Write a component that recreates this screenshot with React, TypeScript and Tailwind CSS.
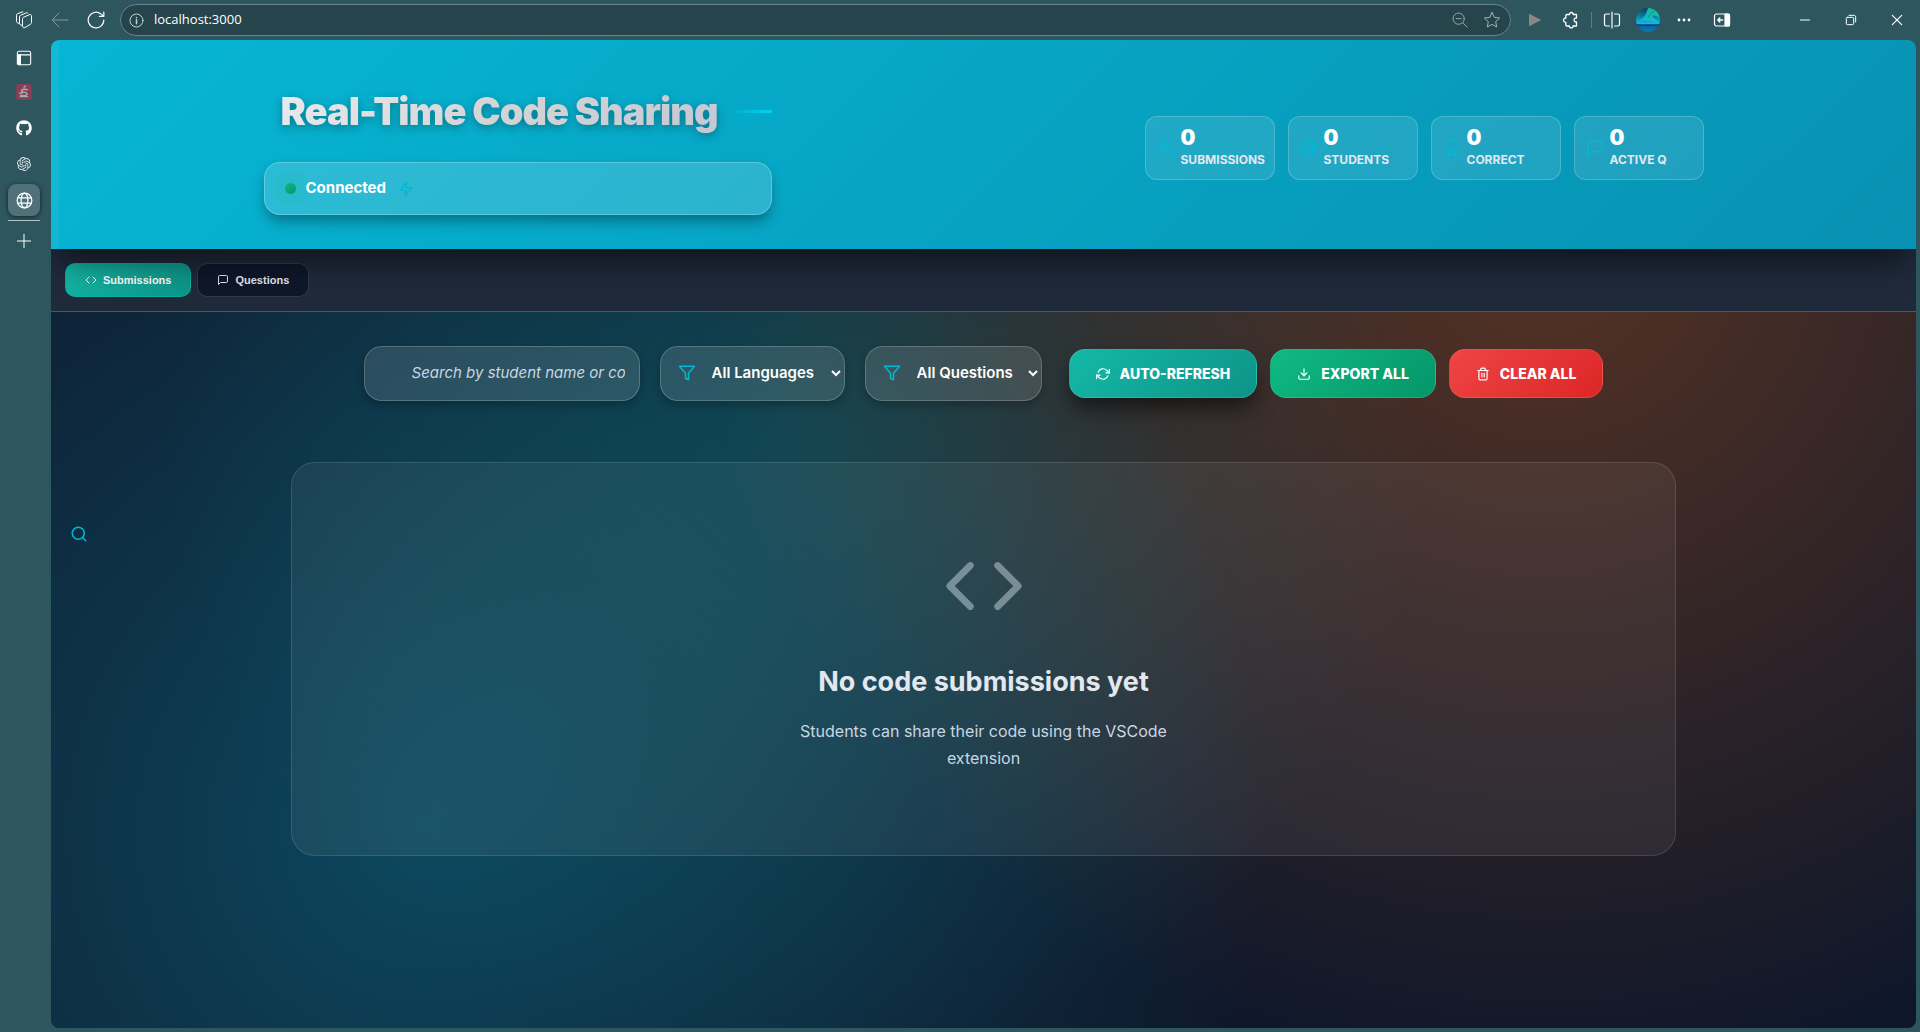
import React from "react";
import {
  FiAward,
  FiCode,
  FiDownload,
  FiFilter,
  FiMessageSquare,
  FiRefreshCw,
  FiSearch,
  FiTrash2,
  FiUsers,
  FiZap,
} from "react-icons/fi";
import { SiOpenai } from "react-icons/si";
import { FaGithub } from "react-icons/fa";

type IconProps = { className?: string };

const Stroke = ({
  className,
  size = 18,
  width = 1,
  children,
}: IconProps & { size?: number; width?: number; children: React.ReactNode }) => (
  <svg
    className={className}
    width={size}
    height={size}
    viewBox="0 0 18 18"
    fill="none"
    stroke="currentColor"
    strokeWidth={width}
    strokeLinecap="round"
    strokeLinejoin="round"
    aria-hidden="true"
  >
    {children}
  </svg>
);

const GlobeIcon = ({ className, size = 18 }: IconProps & { size?: number }) => (
  <Stroke className={className} size={size} width={1.3}>
    <circle cx="9" cy="9" r="7.8" />
    <ellipse cx="9" cy="9" rx="3.6" ry="7.8" />
    <path d="M1.8 6.2h14.4M1.8 11.8h14.4" />
  </Stroke>
);

const ToolButton = ({
  label,
  className = "",
  children,
}: {
  label: string;
  className?: string;
  children: React.ReactNode;
}) => (
  <button aria-label={label} className={`flex h-8 items-center justify-center ${className}`}>
    {children}
  </button>
);

function BrowserBar() {
  return (
    <div className="flex h-10 items-center text-white">
      <ToolButton label="Workspaces" className="ml-2 w-8">
        <Stroke>
          <path d="M7.5 7.8c0-.8.3-1.200.9-1.500l6-2.600c1.200-.5 2.100.1 2.100 1.200v6.600c0 .8-.3 1.300-1 1.700l-5.400 3.300c-1.300.7-2.600 0-2.600-1.300z" />
          <path d="M7 14.500l-1.800-.9c-.5-.3-.7-.7-.7-1.300V5.800c0-.7.3-1.200.9-1.400l5.600-2.500c.8-.3 1.500-.1 2 .5" />
          <path d="M4 12.500l-1.800-.9c-.5-.3-.7-.7-.7-1.300V4.200c0-.7.3-1.200.9-1.400L7.800.8" />
        </Stroke>
      </ToolButton>
      <ToolButton label="Back" className="ml-1 w-8 text-[#83999e]">
        <Stroke>
          <path d="M17 9H1.500M8 2 1.200 9 8 16" />
        </Stroke>
      </ToolButton>
      <ToolButton label="Reload" className="ml-1 w-8">
        <Stroke width={1.2}>
          <path d="M16.800 9A7.800 7.800 0 1 1 13.800 2.900L16.600 5.200M16.800 1v4.400h-4.400" />
        </Stroke>
      </ToolButton>
      <div className="ml-2 flex h-8 flex-1 items-center rounded-full border border-[#68838a] bg-[#26444c] pr-0.5 pl-2">
        <Stroke size={15} className="text-[#c7d1d3]" width={1.2}>
          <circle cx="9" cy="9" r="7.800" />
          <path d="M9 8.200V13M9 5.400v.4" strokeWidth="1.800" />
        </Stroke>
        <input
          aria-label="Address"
          defaultValue="localhost:3000"
          className="ml-[10px] min-w-0 flex-1 bg-transparent font-['Open_Sans',sans-serif] text-[13px] text-white outline-none"
        />
        <ToolButton label="Zoom out" className="w-8 text-[#a3b3b7]">
          <Stroke size={16}>
            <circle cx="7.500" cy="7.500" r="6.300" />
            <path d="M4.800 7.500h5.400M12 12l5 5" />
          </Stroke>
        </ToolButton>
        <ToolButton label="Add to favorites" className="w-8 text-[#a3b3b7]">
          <Stroke>
            <path d="m9 1.400 2.300 4.900 5.300.7-3.900 3.700 1 5.300L9 13.400 4.300 16l1-5.300L1.400 7l5.300-.7z" />
          </Stroke>
        </ToolButton>
      </div>
      <ToolButton label="Run" className="ml-2 w-8">
        <svg width="14" height="14" viewBox="0 0 14 14" aria-hidden="true">
          <path d="M1 .8 13.400 7 1 13.200z" fill="#8a8785" />
        </svg>
      </ToolButton>
      <ToolButton label="Extensions" className="ml-1 w-8">
        <Stroke width={1.3}>
          <path d="M5 3.500h2.500c0-2.700 3.700-2.700 3.700 0H14.500V7c-.2 0-2.400-.3-2.400 2s2.200 2 2.400 2v4H11c0 2.600-3.600 2.600-3.600 0H5c-.8 0-1.200-.4-1.200-1.200v-2.500c-3 0-3-4.300 0-4.300V4.800c0-.8.4-1.300 1.200-1.300z" />
        </Stroke>
      </ToolButton>
      <div className="ml-1 h-4 w-px bg-[#5f7d83]" />
      <ToolButton label="Split screen" className="ml-1 w-8">
        <Stroke width={1.2}>
          <path d="M6.500 3H3.200C2 3 1.500 3.600 1.500 4.700v8.600c0 1.100.5 1.700 1.700 1.700h3.300M11.500 3h3.300c1.200 0 1.700.6 1.700 1.700v8.600c0 1.100-.5 1.700-1.700 1.700h-3.300M9 1v16" />
        </Stroke>
      </ToolButton>
      <ToolButton label="Profile" className="ml-1 w-8">
        <svg width="24" height="24" viewBox="0 0 24 24" aria-hidden="true">
          <defs>
            <clipPath id="avatar">
              <circle cx="12" cy="12" r="12" />
            </clipPath>
            <linearGradient id="sky" x1="0" y1="0" x2="0" y2="1">
              <stop offset="0" stopColor="#063f5e" />
              <stop offset=".45" stopColor="#0897bb" />
              <stop offset=".66" stopColor="#14b9dc" />
              <stop offset=".7" stopColor="#08307d" />
              <stop offset=".78" stopColor="#0869a6" />
              <stop offset="1" stopColor="#087fa6" />
            </linearGradient>
            <linearGradient id="aurora" x1="0" y1="1" x2="1" y2="0">
              <stop offset="0" stopColor="#12b6dc" />
              <stop offset="1" stopColor="#18d69a" />
            </linearGradient>
          </defs>
          <g clipPath="url(#avatar)">
            <rect width="24" height="24" fill="url(#sky)" />
            <path d="M2 13C9 11 10 6 12 0h7c2 3 4 6 5 10-3-2-5-3-8-2 2 2 4 4 7 7-7-2-14-3-21-2z" fill="url(#aurora)" opacity=".85" />
            <path d="M10 1c-1 4-3 6-6 8M19 3c-3 1-5 3-7 7" stroke="#064a67" strokeWidth="1" fill="none" opacity=".4" />
          </g>
        </svg>
      </ToolButton>
      <ToolButton label="Settings and more" className="ml-1 w-8">
        <svg width="14" height="4" viewBox="0 0 14 4" fill="currentColor" aria-hidden="true">
          <circle cx="2" cy="2" r="1.400" />
          <circle cx="7" cy="2" r="1.400" />
          <circle cx="12" cy="2" r="1.400" />
        </svg>
      </ToolButton>
      <ToolButton label="Sidebar" className="ml-1.5 w-8">
        <Stroke width={1.2}>
          <rect x="1.500" y="3" width="15" height="12" rx="2" />
          <path d="M12 3h3.500c.8 0 1 .5 1 1v10c0 .6-.2 1-1 1H12z" fill="currentColor" />
          <path d="M9.500 9H5M6.800 7 4.800 9l2 2" strokeWidth="1.500" />
        </Stroke>
      </ToolButton>
      <ToolButton label="Minimize" className="ml-11 w-[46px]">
        <Stroke size={12} width={1.5}>
          <path d="M2 9h14" />
        </Stroke>
      </ToolButton>
      <ToolButton label="Restore" className="w-[46px]">
        <Stroke size={12} width={1.5}>
          <rect x="2" y="5" width="11" height="11" rx="1.500" />
          <path d="M6 2h7.500C15 2 16 3 16 4.500V12" />
        </Stroke>
      </ToolButton>
      <ToolButton label="Close" className="w-[46px]">
        <Stroke size={12} width={1.8}>
          <path d="m2 2 14 14M16 2 2 16" />
        </Stroke>
      </ToolButton>
    </div>
  );
}

function TabStrip() {
  return (
    <nav
      aria-label="Vertical tabs"
      className="flex w-[51px] shrink-0 flex-col items-center gap-1 pr-[3px] text-white"
    >
      <button aria-label="Tab actions" className="flex h-8 w-8 items-center justify-center pt-1">
        <Stroke size={16} width={1.2}>
          <rect x="1.500" y="1.500" width="15" height="15" rx="2" />
          <path d="M2 5.500h14" />
          <path d="M2 5.500h3v11H3c-.7 0-1-.4-1-1z" fill="currentColor" />
        </Stroke>
      </button>
      <button aria-label="Saved page tab" className="flex h-8 w-8 items-center justify-center">
        <svg width="16" height="16" viewBox="0 0 16 16" aria-hidden="true">
          <path d="M3 0h10c2 0 3 1 3 3-.5 2-.5 3 0 5-.5 2-.5 3 0 5 0 2-1 3-3 3H3c-2 0-3-1-3-3 .5-2 .5-3 0-5 .5-2 .5-3 0-5 0-2 1-3 3-3z" fill="#8b3d56" />
          <path
            d="M11.500 5.800C10 4.900 5.500 4.900 5.500 6.700c0 1.700 5.500 1.200 5.500 3.300 0 2-4.500 2.200-6.500 1.200M3.500 9h3M4 12.600h7.500M8 3.200 9.500 2"
            stroke="#a3acb0"
            strokeWidth="1.400"
            fill="none"
            strokeLinecap="round"
          />
        </svg>
      </button>
      <button aria-label="GitHub tab" className="flex h-8 w-8 items-center justify-center">
        <FaGithub size={16} />
      </button>
      <button aria-label="ChatGPT tab" className="flex h-8 w-8 items-center justify-center text-[#dfe6e7]">
        <SiOpenai size={14} />
      </button>
      <button
        aria-label="localhost tab"
        className="flex h-8 w-8 items-center justify-center rounded-lg bg-[#50717a] shadow-[0_1px_4px_rgba(0,0,0,0.6)]"
      >
        <GlobeIcon size={17} />
      </button>
      <div className="h-px w-8 bg-[#b4c2c5]" />
      <button aria-label="New tab" className="flex h-8 w-8 items-center justify-center">
        <Stroke size={14} width={1.3}>
          <path d="M9 0v18M0 9h18" />
        </Stroke>
      </button>
    </nav>
  );
}

const stats = [
  { label: "Submissions", value: 0, Icon: FiUsers },
  { label: "Students", value: 0, Icon: GlobeIcon },
  { label: "Correct", value: 0, Icon: FiAward },
  { label: "Active Q", value: 0, Icon: FiMessageSquare },
];

function Hero() {
  return (
    <header className="relative z-10 border-l-8 border-white/5 bg-[linear-gradient(135deg,#06b6d4,#0891b2)] bg-origin-border shadow-[0_20px_32px_-8px_rgba(0,0,0,0.55)]">
      <div className="mx-auto flex max-w-[1448px] items-center justify-between pt-[41px] pr-2 pb-[34px]">
        <div className="flex flex-col gap-5">
          <div className="flex items-center gap-4 pl-[17px]">
            <h1 className="bg-[linear-gradient(135deg,#e9ebee,#d4d4d4_50%,#c4c8d4)] bg-clip-text text-[38px]/[61px] font-black tracking-tight text-transparent drop-shadow-[0_3px_5px_rgba(0,0,0,0.3)]">
              Real-Time Code Sharing
            </h1>
            <span className="h-[3px] w-[38px] rounded-full bg-linear-to-r from-[#00d4f5]/10 to-[#00d4f5] shadow-[0_2px_8px_rgba(0,212,245,0.3)]" />
          </div>
          <div className="flex h-[53px] items-center rounded-2xl border border-white/25 bg-white/15 px-5 shadow-[0_8px_14px_-2px_rgba(0,0,0,0.35)]">
            <span className="size-[11px] rounded-full bg-linear-to-br from-[#10b981] to-[#059669] ring-[11px] ring-[#10b981]/10" />
            <span className="ml-[10px] text-[15px] font-bold text-white">Connected</span>
            <FiZap size={16} className="ml-3 text-[#06b6d4]" />
          </div>
        </div>
        <dl className="flex gap-[13px]">
          {stats.map(({ label, value, Icon }) => (
            <div
              key={label}
              className="flex h-16 w-[130px] items-center gap-[6px] rounded-xl border border-white/20 bg-white/10 pl-[11px]"
            >
              <Icon size={18} className="shrink-0 text-[#06b6d4]" />
              <div className="flex flex-col-reverse pb-[3px]">
                <dt className="text-[12px]/[18px] font-bold text-slate-200 uppercase">{label}</dt>
                <dd className="text-[21px]/[26px] font-black text-white">{value}</dd>
              </div>
            </div>
          ))}
        </dl>
      </div>
    </header>
  );
}

function ViewTabs() {
  return (
    <nav
      aria-label="Views"
      className="flex gap-[6px] border-b border-[#4b5565] bg-[#1f2a3b] px-[14px] py-[14px] font-['Liberation_Sans',Arial,sans-serif] text-[11px] font-bold"
    >
      <button className="flex h-[34px] items-center gap-[6px] rounded-[10px] border border-teal-500/60 bg-[linear-gradient(135deg,#14b8a6,#0d9488)] px-[19px] text-white">
        <FiCode size={12} />
        Submissions
      </button>
      <button className="flex h-[34px] items-center gap-[6px] rounded-[10px] border border-white/15 bg-[#0f172a] px-[19px] text-slate-200">
        <FiMessageSquare size={12} />
        Questions
      </button>
    </nav>
  );
}

const FilterSelect = ({ label, className }: { label: string; className: string }) => (
  <label className={`relative block ${className}`}>
    <FiFilter size={18} className="pointer-events-none absolute top-[18px] left-[18px] text-[#06b6d4]" />
    <select
      aria-label={label}
      className="h-[55px] w-full rounded-[18px] border border-white/20 bg-white/12 pb-0.5 pl-[47px] text-[15px] font-semibold text-white shadow-[0_4px_8px_rgba(0,0,0,0.25)]"
    >
      <option>{label}</option>
    </select>
  </label>
);

const actionClass =
  "flex h-[49px] items-center gap-[10px] rounded-2xl border border-white/10 px-[26px] text-[14px] font-extrabold text-white uppercase";

function Toolbar() {
  return (
    <div className="flex items-center justify-center gap-5">
      <input
        type="text"
        aria-label="Search submissions"
        placeholder="Search by student name or code..."
        className="h-[55px] w-[276px] rounded-[18px] border border-white/20 bg-white/12 pr-[14px] pb-0.5 pl-[47px] text-[15px] text-white shadow-[0_4px_8px_rgba(0,0,0,0.25)] placeholder:text-slate-300 placeholder:italic"
      />
      <FilterSelect label="All Languages" className="w-[185px]" />
      <FilterSelect label="All Questions" className="w-[177px]" />
      <div className="ml-[7px] flex gap-[13px]">
        <button
          className={`${actionClass} bg-[linear-gradient(135deg,#14b8a6,#0d9488)] shadow-[0_12px_22px_-3px_rgba(0,0,0,0.6)]`}
        >
          <FiRefreshCw size={14} />
          Auto-Refresh
        </button>
        <button className={`${actionClass} bg-[linear-gradient(135deg,#10b981,#059669)]`}>
          <FiDownload size={14} />
          Export All
        </button>
        <button className={`${actionClass} bg-[linear-gradient(135deg,#ef4444,#dc2626)]`}>
          <FiTrash2 size={14} />
          Clear All
        </button>
      </div>
    </div>
  );
}

function EmptyState() {
  return (
    <section className="mx-auto mt-[61px] flex h-[394px] w-full max-w-[1385px] flex-col items-center rounded-3xl border border-white/12 bg-white/6 pt-[82px] text-center">
      <FiCode size={82} className="text-slate-300/50" />
      <h2 className="mt-[35px] text-[27px]/[40px] font-bold text-slate-200">No code submissions yet</h2>
      <p className="mt-4 max-w-[400px] text-[16px]/[27px] text-slate-300">
        Students can share their code using the VSCode extension
      </p>
    </section>
  );
}

export default function App() {
  return (
    <div className="flex min-h-screen flex-col bg-[#2d565f] font-[Inter,sans-serif]">
      <BrowserBar />
      <div className="flex flex-1 pr-1 pb-1">
        <TabStrip />
        <div className="relative flex flex-1 flex-col overflow-hidden rounded-lg bg-[#0f172a] bg-[radial-gradient(circle_at_20%_80%,rgba(6,182,212,0.3),transparent_50%),radial-gradient(circle_at_80%_20%,rgba(249,115,22,0.3),transparent_50%),radial-gradient(circle_at_40%_40%,rgba(20,184,166,0.2),transparent_50%)]">
          <Hero />
          <ViewTabs />
          <main className="flex-1 px-5 pt-[34px]">
            <FiSearch size={18} className="absolute top-1/2 left-[19px] -translate-y-1/2 text-[#06b6d4]" />
            <Toolbar />
            <EmptyState />
          </main>
        </div>
      </div>
    </div>
  );
}
